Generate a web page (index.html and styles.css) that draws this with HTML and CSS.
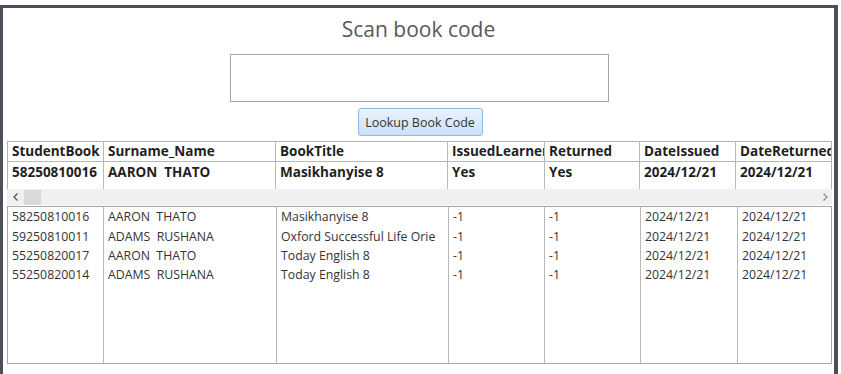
FILE: index.html
```html
<!DOCTYPE html>
<html lang="en">
<head>
    <meta charset="UTF-8">
    <title>Scan book code</title>
    <link rel="stylesheet" href="styles.css">
</head>
<body>
    <div class="frame">
        <h1 class="title">Scan book code</h1>
        <div class="scan-box"><input class="scan-input" type="text"></div>
        <div class="lookup"><button class="lookup-button">Lookup Book Code</button></div>

        <div class="sheet-wrap">
            <div class="sheet-head">
                <div class="row head-row">
                    <div class="cell">StudentBook</div>
                    <div class="cell">Surname_Name</div>
                    <div class="cell">BookTitle</div>
                    <div class="cell">IssuedLearner</div>
                    <div class="cell">Returned</div>
                    <div class="cell">DateIssued</div>
                    <div class="cell">DateReturned</div>
                </div>
                <div class="row head-row current-row">
                    <div class="cell">58250810016</div>
                    <div class="cell">AARON&nbsp; THATO</div>
                    <div class="cell">Masikhanyise 8</div>
                    <div class="cell">Yes</div>
                    <div class="cell">Yes</div>
                    <div class="cell">2024/12/21</div>
                    <div class="cell">2024/12/21</div>
                </div>
            </div>
            <div class="hscroll">
                <svg class="arrow" width="8" height="10" viewBox="0 0 8 10"><path d="M5.5 1.5 L2 5 L5.5 8.5" fill="none" stroke="#555" stroke-width="1.3"/></svg>
                <div class="thumb"></div>
                <svg class="arrow arrow-right" width="8" height="10" viewBox="0 0 8 10"><path d="M2.5 1.5 L6 5 L2.5 8.5" fill="none" stroke="#8a8a8a" stroke-width="1.3"/></svg>
            </div>

            <div class="sheet">
                <div class="row list-row">
                    <div class="cell">58250810016</div>
                    <div class="cell">AARON&nbsp; THATO</div>
                    <div class="cell">Masikhanyise 8</div>
                    <div class="cell">-1</div>
                    <div class="cell">-1</div>
                    <div class="cell">2024/12/21</div>
                    <div class="cell">2024/12/21</div>
                </div>
                <div class="row list-row">
                    <div class="cell">59250810011</div>
                    <div class="cell">ADAMS&nbsp; RUSHANA</div>
                    <div class="cell">Oxford Successful Life Orie</div>
                    <div class="cell">-1</div>
                    <div class="cell">-1</div>
                    <div class="cell">2024/12/21</div>
                    <div class="cell">2024/12/21</div>
                </div>
                <div class="row list-row">
                    <div class="cell">55250820017</div>
                    <div class="cell">AARON&nbsp; THATO</div>
                    <div class="cell">Today English 8</div>
                    <div class="cell">-1</div>
                    <div class="cell">-1</div>
                    <div class="cell">2024/12/21</div>
                    <div class="cell">2024/12/21</div>
                </div>
                <div class="row list-row">
                    <div class="cell">55250820014</div>
                    <div class="cell">ADAMS&nbsp; RUSHANA</div>
                    <div class="cell">Today English 8</div>
                    <div class="cell">-1</div>
                    <div class="cell">-1</div>
                    <div class="cell">2024/12/21</div>
                    <div class="cell">2024/12/21</div>
                </div>
                <div class="row list-row filler">
                    <div class="cell"></div>
                    <div class="cell"></div>
                    <div class="cell"></div>
                    <div class="cell"></div>
                    <div class="cell"></div>
                    <div class="cell"></div>
                    <div class="cell"></div>
                </div>
            </div>
        </div>
    </div>
</body>
</html>
```

FILE: styles.css
```css
body { margin: 0; background: #fff; font-family: 'Open Sans', 'DejaVu Sans', sans-serif; color: #262626; overflow: hidden; }

.frame {
    margin-top: 5px;
    width: 838px;
    height: 369px;
    box-sizing: border-box;
    border: 3px solid #4b5059;
    border-right-width: 4px;
    border-bottom: none;
    padding-top: 7px;
}

.title { margin: 0; text-align: center; font-size: 21px; font-weight: 400; color: #595959; line-height: 29px; }

.scan-box { display: flex; justify-content: center; margin-top: 10px; padding-left: 1px; }
.scan-input { width: 379px; height: 48px; box-sizing: border-box; border: 1px solid #a6a6a6; margin: 0; padding: 0; }

.lookup { display: flex; justify-content: center; margin-top: 6px; padding-left: 3px; }
.lookup-button {
    height: 28px;
    width: 125px;
    padding: 0;
    border: 1px solid #8fb9e4;
    border-radius: 3px;
    background: linear-gradient(#eaf3fd, #c9e0f8);
    font-family: 'Open Sans', sans-serif;
    font-size: 12.5px;
    color: #333;
}

.sheet-wrap { margin: 5px 0 0 4px; width: 825px; }

.sheet-head { border: 1px solid #b3b3b3; border-bottom: none; overflow: hidden; }
.row { display: grid; }
.cell { padding-left: 4px; border-right: 1px solid #b9b9b9; white-space: nowrap; overflow: hidden; }

.head-row { grid-template-columns: 96px 172px 172px 97px 95px 96px 120px; width: 880px; font-size: 13.5px; font-weight: 700; color: #1f1f1f; }
.head-row .cell { height: 19px; line-height: 19px; }
.head-row:first-child { border-bottom: 1px solid #b9b9b9; }
.current-row .cell { height: 27px; line-height: 20px; }

.hscroll { display: flex; align-items: center; height: 16px; background: #f0f0f0; margin-bottom: 1px; }
.arrow { margin-left: 5px; }
.thumb { width: 17px; height: 15px; background: #d9d9d9; margin-left: 4px; }
.arrow-right { margin-left: auto; margin-right: 3px; }

.sheet { border: 1px solid #a6a6a6; height: 156px; overflow: hidden; display: flex; flex-direction: column; }
.list-row { grid-template-columns: 96px 173px 172px 96px 96px 97px 1fr; font-size: 12.3px; color: #333; }
.list-row .cell { height: 19px; line-height: 19px; }
.list-row:first-child .cell { height: 20px; }
.list-row .cell:last-child { border-right: none; }
.filler { flex: 1; }
.filler .cell { height: auto; }
```
